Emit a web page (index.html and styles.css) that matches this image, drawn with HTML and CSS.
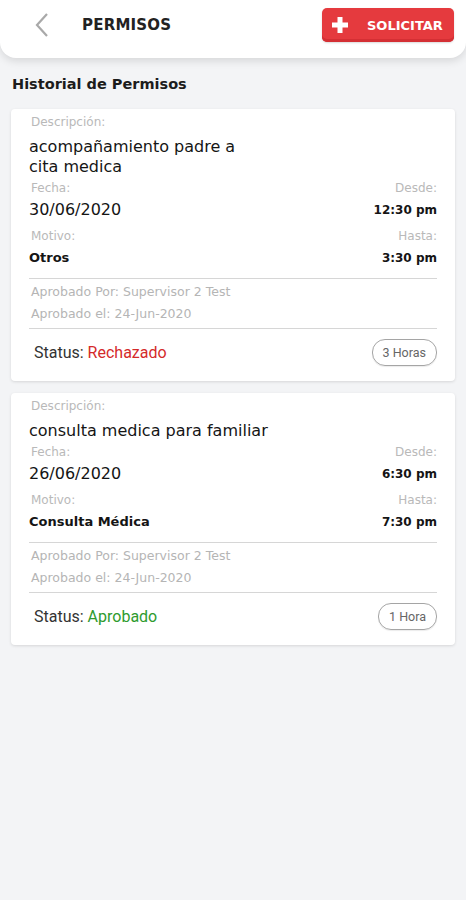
FILE: index.html
```html
<!DOCTYPE html>
<html lang="es">
<head>
  <meta charset="UTF-8" />
  <title>Permisos</title>
  <meta name="viewport" content="width=device-width, initial-scale=1" />
  <link rel="stylesheet" href="styles.css">
</head>
<body>
  <header class="topbar">
    <div class="topbar-left">
      <svg class="back" width="14" height="24" viewBox="0 0 14 24">
        <path d="M12 1 L2 12 L12 23" fill="none" stroke="#a9a9a9" stroke-width="2.2" />
      </svg>
      <span class="title">PERMISOS</span>
    </div>
    <button class="btn-request">
      <svg width="18" height="18" viewBox="0 0 18 18">
        <path d="M9 1 V17 M1 9 H17" stroke="#fff" stroke-width="5" />
      </svg>
      <span>SOLICITAR</span>
    </button>
  </header>

  <h3 class="section-title">Historial de Permisos</h3>

  <!-- permiso 1 -->
  <div class="card">
    <div class="label">Descripción:</div>
    <div class="desc">acompañamiento padre a<br />cita medica</div>
    <div class="row">
      <span class="label">Fecha:</span>
      <span class="label">Desde:</span>
    </div>
    <div class="row row-value">
      <span class="date">30/06/2020</span>
      <span class="time">12:30 pm</span>
    </div>
    <div class="row">
      <span class="label">Motivo:</span>
      <span class="label">Hasta:</span>
    </div>
    <div class="row row-value">
      <span class="reason">Otros</span>
      <span class="time">3:30 pm</span>
    </div>
    <div class="approval">
      <div>Aprobado Por: Supervisor 2 Test</div>
      <div>Aprobado el: 24-Jun-2020</div>
    </div>
    <div class="status-row">
      <span class="status">Status: <span class="rejected">Rechazado</span></span>
      <span class="pill">3 Horas</span>
    </div>
  </div>

  <!-- permiso 2 -->
  <div class="card">
    <div class="label">Descripción:</div>
    <div class="desc">consulta medica para familiar</div>
    <div class="row">
      <span class="label">Fecha:</span>
      <span class="label">Desde:</span>
    </div>
    <div class="row row-value">
      <span class="date">26/06/2020</span>
      <span class="time">6:30 pm</span>
    </div>
    <div class="row">
      <span class="label">Motivo:</span>
      <span class="label">Hasta:</span>
    </div>
    <div class="row row-value">
      <span class="reason">Consulta Médica</span>
      <span class="time">7:30 pm</span>
    </div>
    <div class="approval">
      <div>Aprobado Por: Supervisor 2 Test</div>
      <div>Aprobado el: 24-Jun-2020</div>
    </div>
    <div class="status-row">
      <span class="status">Status: <span class="approved">Aprobado</span></span>
      <span class="pill">1 Hora</span>
    </div>
  </div>
</body>
</html>
```

FILE: styles.css
```css
body {
  font-family: 'DejaVu Sans', sans-serif;
  background: #f3f4f6;
  margin: 0;
  color: #151515;
}
.topbar {
  background: #fff;
  height: 58px;
  box-sizing: border-box;
  padding: 8px 12px 16px 35px;
  display: flex;
  justify-content: space-between;
  align-items: center;
  border-radius: 0 0 16px 16px;
  box-shadow: 0 3px 8px rgba(0, 0, 0, 0.12);
}
.topbar-left {
  display: flex;
  align-items: center;
}
.back {
  display: block;
}
.title {
  margin-left: 33px;
  font-size: 15px;
  font-weight: 600;
  color: #222;
  letter-spacing: 0.2px;
}
.btn-request {
  height: 34px;
  width: 132px;
  border: none;
  border-radius: 5px;
  background: #e53a3e;
  box-shadow: inset 0 -3px 0 #d42f34, 0 1px 2px rgba(0, 0, 0, 0.15);
  display: flex;
  align-items: center;
  padding: 0 8px 0 9px;
  gap: 18px;
  color: #fff;
  font-family: 'DejaVu Sans', sans-serif;
  font-size: 13px;
  font-weight: bold;
  white-space: nowrap;
}
.btn-request svg {
  display: block;
  flex-shrink: 0;
}
.section-title {
  margin: 16px 12px 15px;
  font-size: 14.5px;
  font-weight: 600;
  line-height: 20px;
  color: #1c1c1c;
}
.card {
  background: #fff;
  margin: 0 11px 12px;
  padding: 4px 18px 15px;
  border-radius: 4px;
  box-shadow: 0 1px 3px rgba(0, 0, 0, 0.12);
}
.label {
  font-size: 12px;
  line-height: 18px;
  color: #b9b9b9;
  margin-left: 2px;
}
.desc {
  font-size: 16px;
  line-height: 20px;
  margin: 6px 0 2px;
}
.row {
  display: flex;
  justify-content: space-between;
}
.row-value {
  line-height: 22px;
  margin: 2px 0 6px;
}
.row-value:last-of-type {
  margin-bottom: 0;
}
.date {
  font-size: 16px;
}
.time {
  font-size: 12px;
  font-weight: bold;
}
.reason {
  font-size: 13px;
  font-weight: 600;
}
.approval {
  margin-top: 9px;
  border-top: 1.5px solid #d6d6d6;
  border-bottom: 1.5px solid #d6d6d6;
  padding: 2px 2px 3px;
  font-size: 12.5px;
  line-height: 22px;
  color: #b5b5b5;
}
.status-row {
  display: flex;
  justify-content: space-between;
  align-items: center;
  padding: 10px 0 0 5px;
}
.status {
  font-family: Roboto, sans-serif;
  font-size: 16px;
  color: #333;
}
.rejected {
  color: #d42a2a;
}
.approved {
  color: #2e9b2e;
}
.pill {
  font-family: Roboto, sans-serif;
  font-size: 12.5px;
  color: #666;
  border: 1px solid #a5a5a5;
  border-radius: 13px;
  height: 27px;
  box-sizing: border-box;
  padding: 0 10px;
  display: flex;
  align-items: center;
  box-shadow: 0 1px 1px rgba(0, 0, 0, 0.08);
}
```
